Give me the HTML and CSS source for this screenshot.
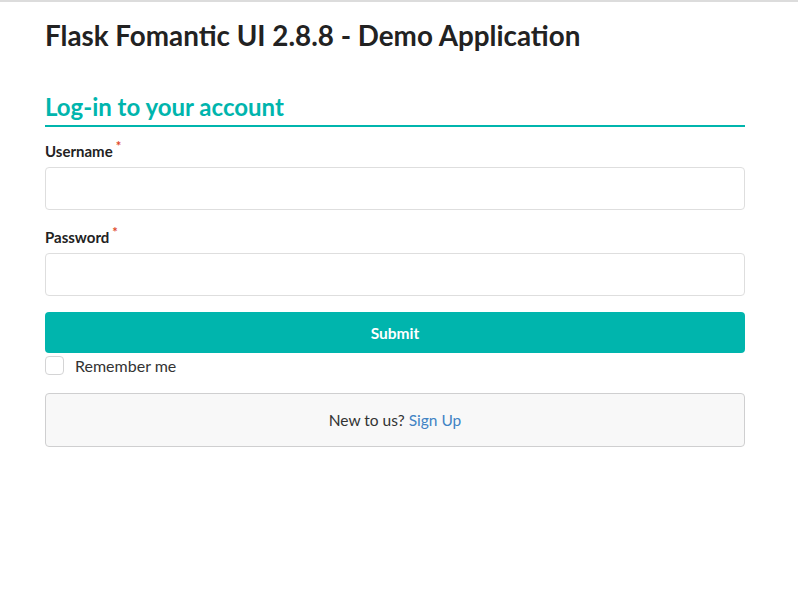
FILE: index.html
```html
<!DOCTYPE html>
<html lang="en">
<head>
<meta charset="utf-8">
<title>Flask Fomantic UI 2.8.8 - Demo Application</title>
<link rel="stylesheet" href="styles.css">
</head>
<body>
<div class="page">
  <h1 class="title">Flask Fomantic UI 2.8.8 - Demo Application</h1>
  <h2 class="section-title">Log-in to your account</h2>
  <form class="form">
    <div class="field">
      <label class="label">Username<span class="req">*</span></label>
      <input class="input" type="text">
    </div>
    <div class="field">
      <label class="label">Password<span class="req">*</span></label>
      <input class="input" type="password">
    </div>
    <button class="submit" type="button">Submit</button>
    <div class="check">
      <span class="box"></span>
      <span class="check-label">Remember me</span>
    </div>
  </form>
  <div class="message">New to us? <a class="link" href="#">Sign Up</a></div>
</div>
</body>
</html>
```
FILE: styles.css
```css
html, body {
  margin: 0;
  padding: 0;
  background: #fff;
}
body {
  font-family: Lato, "Helvetica Neue", Arial, sans-serif;
  font-size: 14px;
  color: rgba(0,0,0,.87);
  border-top: 2px solid #dcdcdc;
}
.page {
  width: 700px;
  margin: 0 45px;
  padding-top: 16px;
}
.title {
  font-size: 27.8px;
  font-weight: 700;
  line-height: 36px;
  margin: 0;
  color: #222;
}
.section-title {
  font-size: 24px;
  font-weight: 700;
  line-height: 31px;
  margin: 37px 0 0;
  padding-bottom: 3px;
  color: #00b5ad;
  border-bottom: 2px solid #00b5ad;
}
.form {
  margin-top: 13px;
}
.field {
  margin-bottom: 16px;
}
.label {
  display: block;
  font-size: 15px;
  font-weight: 700;
  line-height: 19px;
  padding-top: 2px;
  margin-bottom: 5px;
  color: #222;
}
.req {
  color: #e0482a;
  font-size: 13px;
  margin-left: 3px;
  position: relative;
  top: -6px;
}
.input {
  display: block;
  box-sizing: border-box;
  width: 100%;
  height: 43px;
  border: 1px solid #dedede;
  border-radius: 4px;
  background: #fff;
  margin: 0;
  font: inherit;
}
.submit {
  display: block;
  width: 100%;
  height: 41px;
  border: 0;
  border-radius: 4px;
  background: #00b5ad;
  color: #fff;
  font-family: Lato, Arial, sans-serif;
  font-size: 15.5px;
  font-weight: 700;
  margin: 0;
}
.check {
  display: flex;
  align-items: center;
  height: 22px;
  margin-top: 1px;
}
.box {
  box-sizing: border-box;
  width: 19px;
  height: 19px;
  border: 1px solid #d4d4d5;
  border-radius: 4px;
  background: #fff;
}
.check-label {
  margin-left: 11px;
  font-size: 16px;
  color: #333;
}
.message {
  margin-top: 17px;
  box-sizing: border-box;
  height: 54px;
  display: flex;
  align-items: center;
  justify-content: center;
  background: #f8f8f8;
  border: 1px solid #cfcfd0;
  border-radius: 4px;
  font-size: 15.5px;
  color: #333;
}
.link {
  color: #4183c4;
  text-decoration: none;
  margin-left: 4px;
}
```
